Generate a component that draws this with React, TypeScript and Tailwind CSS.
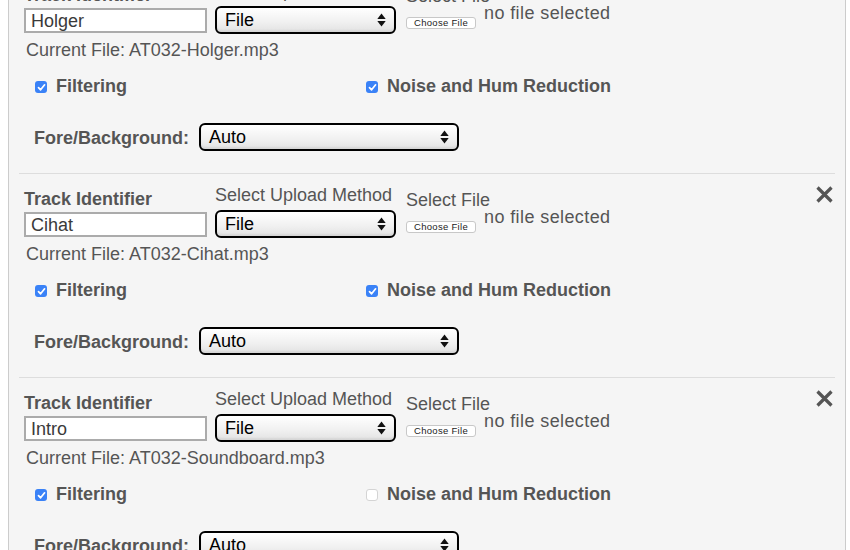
import React from "react";

type Track = { id: string; file: string; filt: boolean; noise: boolean };

const tracks: Track[] = [
  { id: "Holger", file: "AT032-Holger.mp3", filt: true, noise: true },
  { id: "Cihat", file: "AT032-Cihat.mp3", filt: true, noise: true },
  { id: "Intro", file: "AT032-Soundboard.mp3", filt: true, noise: false },
];

function Arrows() {
  return (
    <svg width="9" height="14" viewBox="0 0 9 14" className="shrink-0">
      <path d="M4.5 0.5 L8.7 6 L0.3 6 Z" fill="#111" />
      <path d="M0.3 8 L8.7 8 L4.5 13.5 Z" fill="#111" />
    </svg>
  );
}

function FakeSelect({ value, w }: { value: string; w: string }) {
  return (
    <div
      className={`${w} h-[28px] border-2 border-black rounded-[6px] bg-[linear-gradient(to_bottom,#ffffff,#f0f0f0_60%,#e2e2e2)] shadow-[inset_0_-2px_2px_rgba(0,0,0,0.06)] flex items-center justify-between pl-[8px] pr-[8px] text-[18px] leading-[20px] text-black`}
    >
      <span>{value}</span>
      <Arrows />
    </div>
  );
}

function Check({ on }: { on: boolean }) {
  if (on) {
    return (
      <div className="w-[12px] h-[12px] rounded-[3px] bg-[#3a82f7] flex items-center justify-center shrink-0">
        <svg width="9" height="9" viewBox="0 0 9 9">
          <path d="M1.5 4.6 L3.6 6.8 L7.6 1.8" stroke="#fff" strokeWidth="1.7" fill="none" strokeLinecap="round" strokeLinejoin="round" />
        </svg>
      </div>
    );
  }
  return <div className="w-[12px] h-[12px] rounded-[3px] bg-white border border-[#d4d4d4] shrink-0" />;
}

function Block({ t }: { t: Track }) {
  return (
    <div className="relative mx-[10px] px-[5px] pt-[11px] pb-[22px] border-b border-[#dddddd]">
      <div className="absolute top-[12px] right-[2px] w-[17px] h-[17px]">
        <svg width="17" height="17" viewBox="0 0 17 17">
          <path d="M1.5 1.5 L15.5 15.5 M15.5 1.5 L1.5 15.5" stroke="#555" strokeWidth="3.2" />
        </svg>
      </div>
      <div className="flex items-start">
        <div className="flex flex-col mt-[4px] w-[183px]">
          <div className="text-[18px] leading-[20px] font-bold text-[#555]">Track Identifier</div>
          <div className="mt-[3px] h-[25px] border-2 border-[#ababab] bg-white pl-[5px] flex items-center text-[18px] leading-[20px] text-[#3a3a3a]">
            {t.id}
          </div>
        </div>
        <div className="flex flex-col ml-[8px]">
          <div className="text-[18px] leading-[20px] text-[#555] whitespace-nowrap">Select Upload Method</div>
          <div className="mt-[5px]">
            <FakeSelect value="File" w="w-[181px]" />
          </div>
        </div>
        <div className="flex flex-col ml-[10px] mt-[5px]">
          <div className="text-[18px] leading-[20px] text-[#555]">Select File</div>
          <div className="flex items-start mt-[-3px]">
            <div className="mt-[14px] w-[70px] h-[12px] bg-white border border-[#c8c8c8] rounded-[3px] flex items-center justify-center text-[9.5px] leading-none text-[#222] tracking-[0.3px]">
              Choose File
            </div>
            <div className="ml-[8px] text-[18px] leading-[20px] text-[#555] tracking-[0.4px] whitespace-nowrap">no file selected</div>
          </div>
        </div>
      </div>
      <div className="mt-[6px] pl-[2px] text-[18px] leading-[20px] text-[#555]">Current File: {t.file}</div>
      <div className="mt-[16px] flex items-start">
        <div className="ml-[11px] w-[331px] flex items-start">
          <div className="mt-[5px]">
            <Check on={t.filt} />
          </div>
          <div className="ml-[9px] text-[18px] leading-[20px] font-bold text-[#555]">Filtering</div>
        </div>
        <div className="flex items-start">
          <div className="mt-[5px]">
            <Check on={t.noise} />
          </div>
          <div className="ml-[9px] text-[18px] leading-[20px] font-bold text-[#555]">Noise and Hum Reduction</div>
        </div>
      </div>
      <div className="mt-[27px] flex items-start">
        <div className="ml-[10px] w-[165px] mt-[5px] text-[18px] leading-[20px] font-bold text-[#555] whitespace-nowrap">
          Fore/Background:
        </div>
        <FakeSelect value="Auto" w="w-[260px]" />
      </div>
    </div>
  );
}

export default function App() {
  return (
    <div className="w-[850px] h-[550px] overflow-hidden bg-white font-['Liberation_Sans',Arial,Helvetica,sans-serif]">
      <div className="ml-[8px] w-[838px] mt-[-31px] border border-[#cccccc] bg-[#f5f5f5]">
        {tracks.map((t) => (
          <Block key={t.id} t={t} />
        ))}
      </div>
    </div>
  );
}
